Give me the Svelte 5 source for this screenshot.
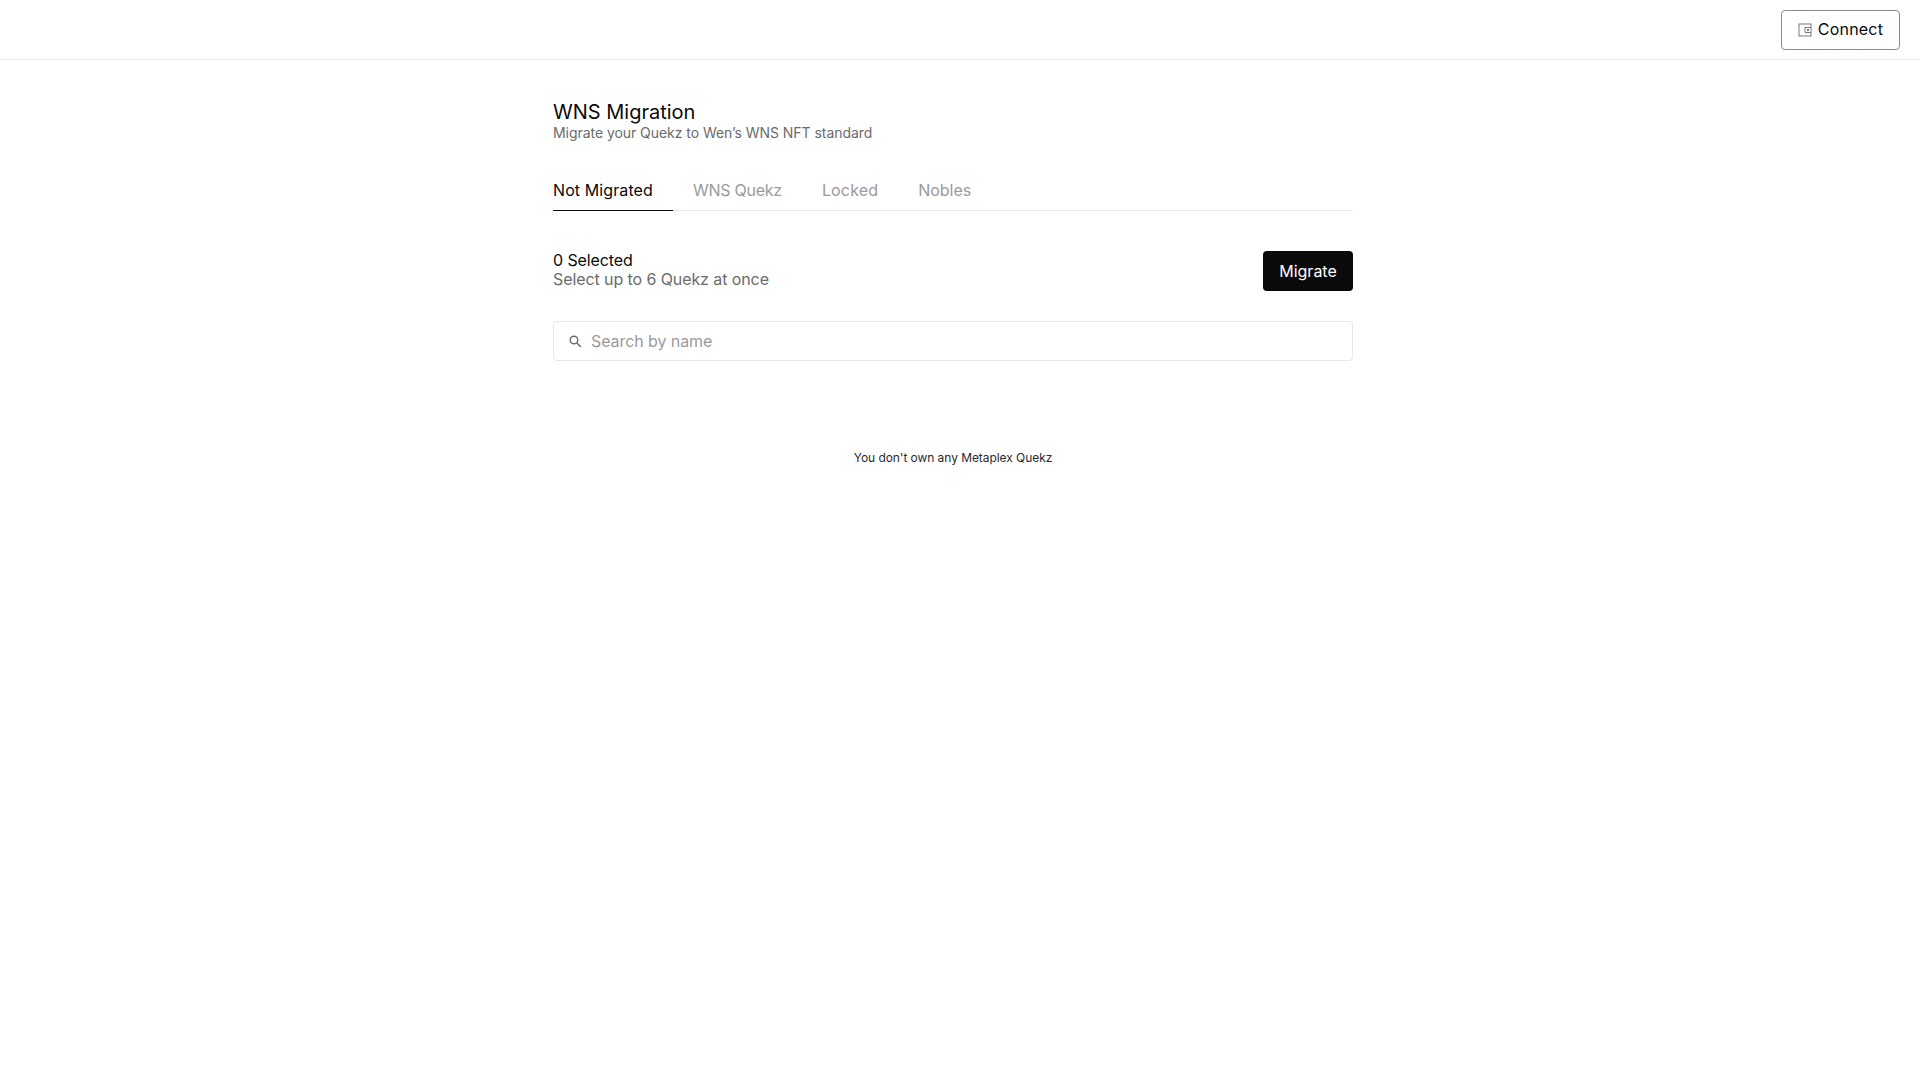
<script lang="ts">
	let search = $state("");
	const tabs = ["Not Migrated", "WNS Quekz", "Locked", "Nobles"];
	let active = $state("Not Migrated");
</script>

<style>
	:global(body) {
		background: #fff;
		font-family: Inter, "Noto Sans", sans-serif;
		color: #0a0a0a;
	}

	header {
		display: flex;
		justify-content: flex-end;
		height: 60px;
		padding: 10px 20px 0;
		box-sizing: border-box;
		border-bottom: 1px solid #e8e8e8;
	}

	button {
		font-family: inherit;
		cursor: pointer;
	}

	.connect {
		display: flex;
		align-items: center;
		justify-content: center;
		gap: 6px;
		width: 119px;
		height: 40px;
		padding: 0 0 2px;
		background: #fff;
		border: 1px solid #8a8a8a;
		border-radius: 4px;
		font-size: 16px;
		letter-spacing: 0.2px;
		color: #0a0a0a;
	}

	.connect svg {
		margin-top: 2px;
	}

	.wrap {
		display: flex;
		justify-content: center;
		padding-right: 14px;
	}

	main {
		width: 800px;
		padding-top: 40px;
	}

	h1 {
		margin: 0;
		font-size: 20px;
		line-height: 24px;
		font-weight: 400;
	}

	.sub {
		margin: 0;
		font-size: 14px;
		line-height: 17px;
		letter-spacing: -0.05px;
		color: #6b6b6b;
	}

	.tabs {
		display: flex;
		gap: 20px;
		margin-top: 40px;
		border-bottom: 1px solid #e8e8e8;
	}

	.tab {
		margin-bottom: -1px;
		padding: 0 20px 10px 0;
		background: none;
		border: 0;
		border-bottom: 1px solid transparent;
		font-size: 16px;
		line-height: 19px;
		color: #9a9a9a;
	}

	.tab:nth-child(1) {
		letter-spacing: 0.1px;
	}

	.tab:nth-child(2) {
		letter-spacing: -0.25px;
	}

	.tab:nth-child(3) {
		letter-spacing: 0.15px;
	}

	.tab.active {
		color: #0a0a0a;
		border-bottom-color: #0a0a0a;
	}

	.status {
		display: flex;
		justify-content: space-between;
		align-items: center;
		margin-top: 40px;
	}

	.status-text {
		padding-bottom: 2px;
	}

	.count {
		font-size: 16px;
		line-height: 19px;
		letter-spacing: -0.1px;
	}

	.hint {
		font-size: 16px;
		line-height: 19px;
		letter-spacing: -0.09px;
		color: #6b6b6b;
	}

	.migrate {
		width: 90px;
		height: 40px;
		padding: 0;
		background: #0a0a0a;
		border: 0;
		border-radius: 4px;
		font-size: 16px;
		color: #fff;
	}

	.search {
		display: flex;
		align-items: center;
		gap: 8px;
		height: 40px;
		margin-top: 30px;
		padding: 0 14px;
		box-sizing: border-box;
		border: 1px solid #e8e8e8;
		border-radius: 4px;
	}

	.search input {
		flex: 1;
		border: 0;
		outline: 0;
		padding: 0;
		font-family: inherit;
		font-size: 16px;
		letter-spacing: -0.08px;
		color: #0a0a0a;
	}

	.search input::placeholder {
		color: #9a9a9a;
		opacity: 1;
	}

	.empty {
		margin: 89px 0 0;
		text-align: center;
		font-size: 12px;
		line-height: 15px;
		letter-spacing: -0.06px;
		color: #2a2a2a;
	}
</style>

<header>
	<button class="connect">
		<svg width="14" height="14" viewBox="0 0 14 14" fill="none" stroke="#7a7a7a" stroke-width="1">
			<rect x="1" y="1" width="12" height="12" />
			<path d="M13 4.5H7v5h6" />
			<rect x="9" y="6" width="2" height="2" fill="#7a7a7a" stroke="none" />
		</svg>
		Connect
	</button>
</header>

<div class="wrap">
	<main>
		<h1>WNS Migration</h1>
		<p class="sub">Migrate your Quekz to Wen’s WNS NFT standard</p>

		<div class="tabs">
			{#each tabs as tab}
				<button class="tab" class:active={tab === active} onclick={() => (active = tab)}>{tab}</button>
			{/each}
		</div>

		<div class="status">
			<div class="status-text">
				<div class="count">0 Selected</div>
				<div class="hint">Select up to 6 Quekz at once</div>
			</div>
			<button class="migrate">Migrate</button>
		</div>

		<label class="search">
			<svg width="15" height="15" viewBox="0 0 15 15" fill="none" stroke="#6b6b6b" stroke-width="1.4">
				<circle cx="6" cy="6" r="3.8" />
				<path d="M8.9 8.9l4 4" />
			</svg>
			<input type="text" placeholder="Search by name" bind:value={search} />
		</label>

		<p class="empty">You don't own any Metaplex Quekz</p>
	</main>
</div>
